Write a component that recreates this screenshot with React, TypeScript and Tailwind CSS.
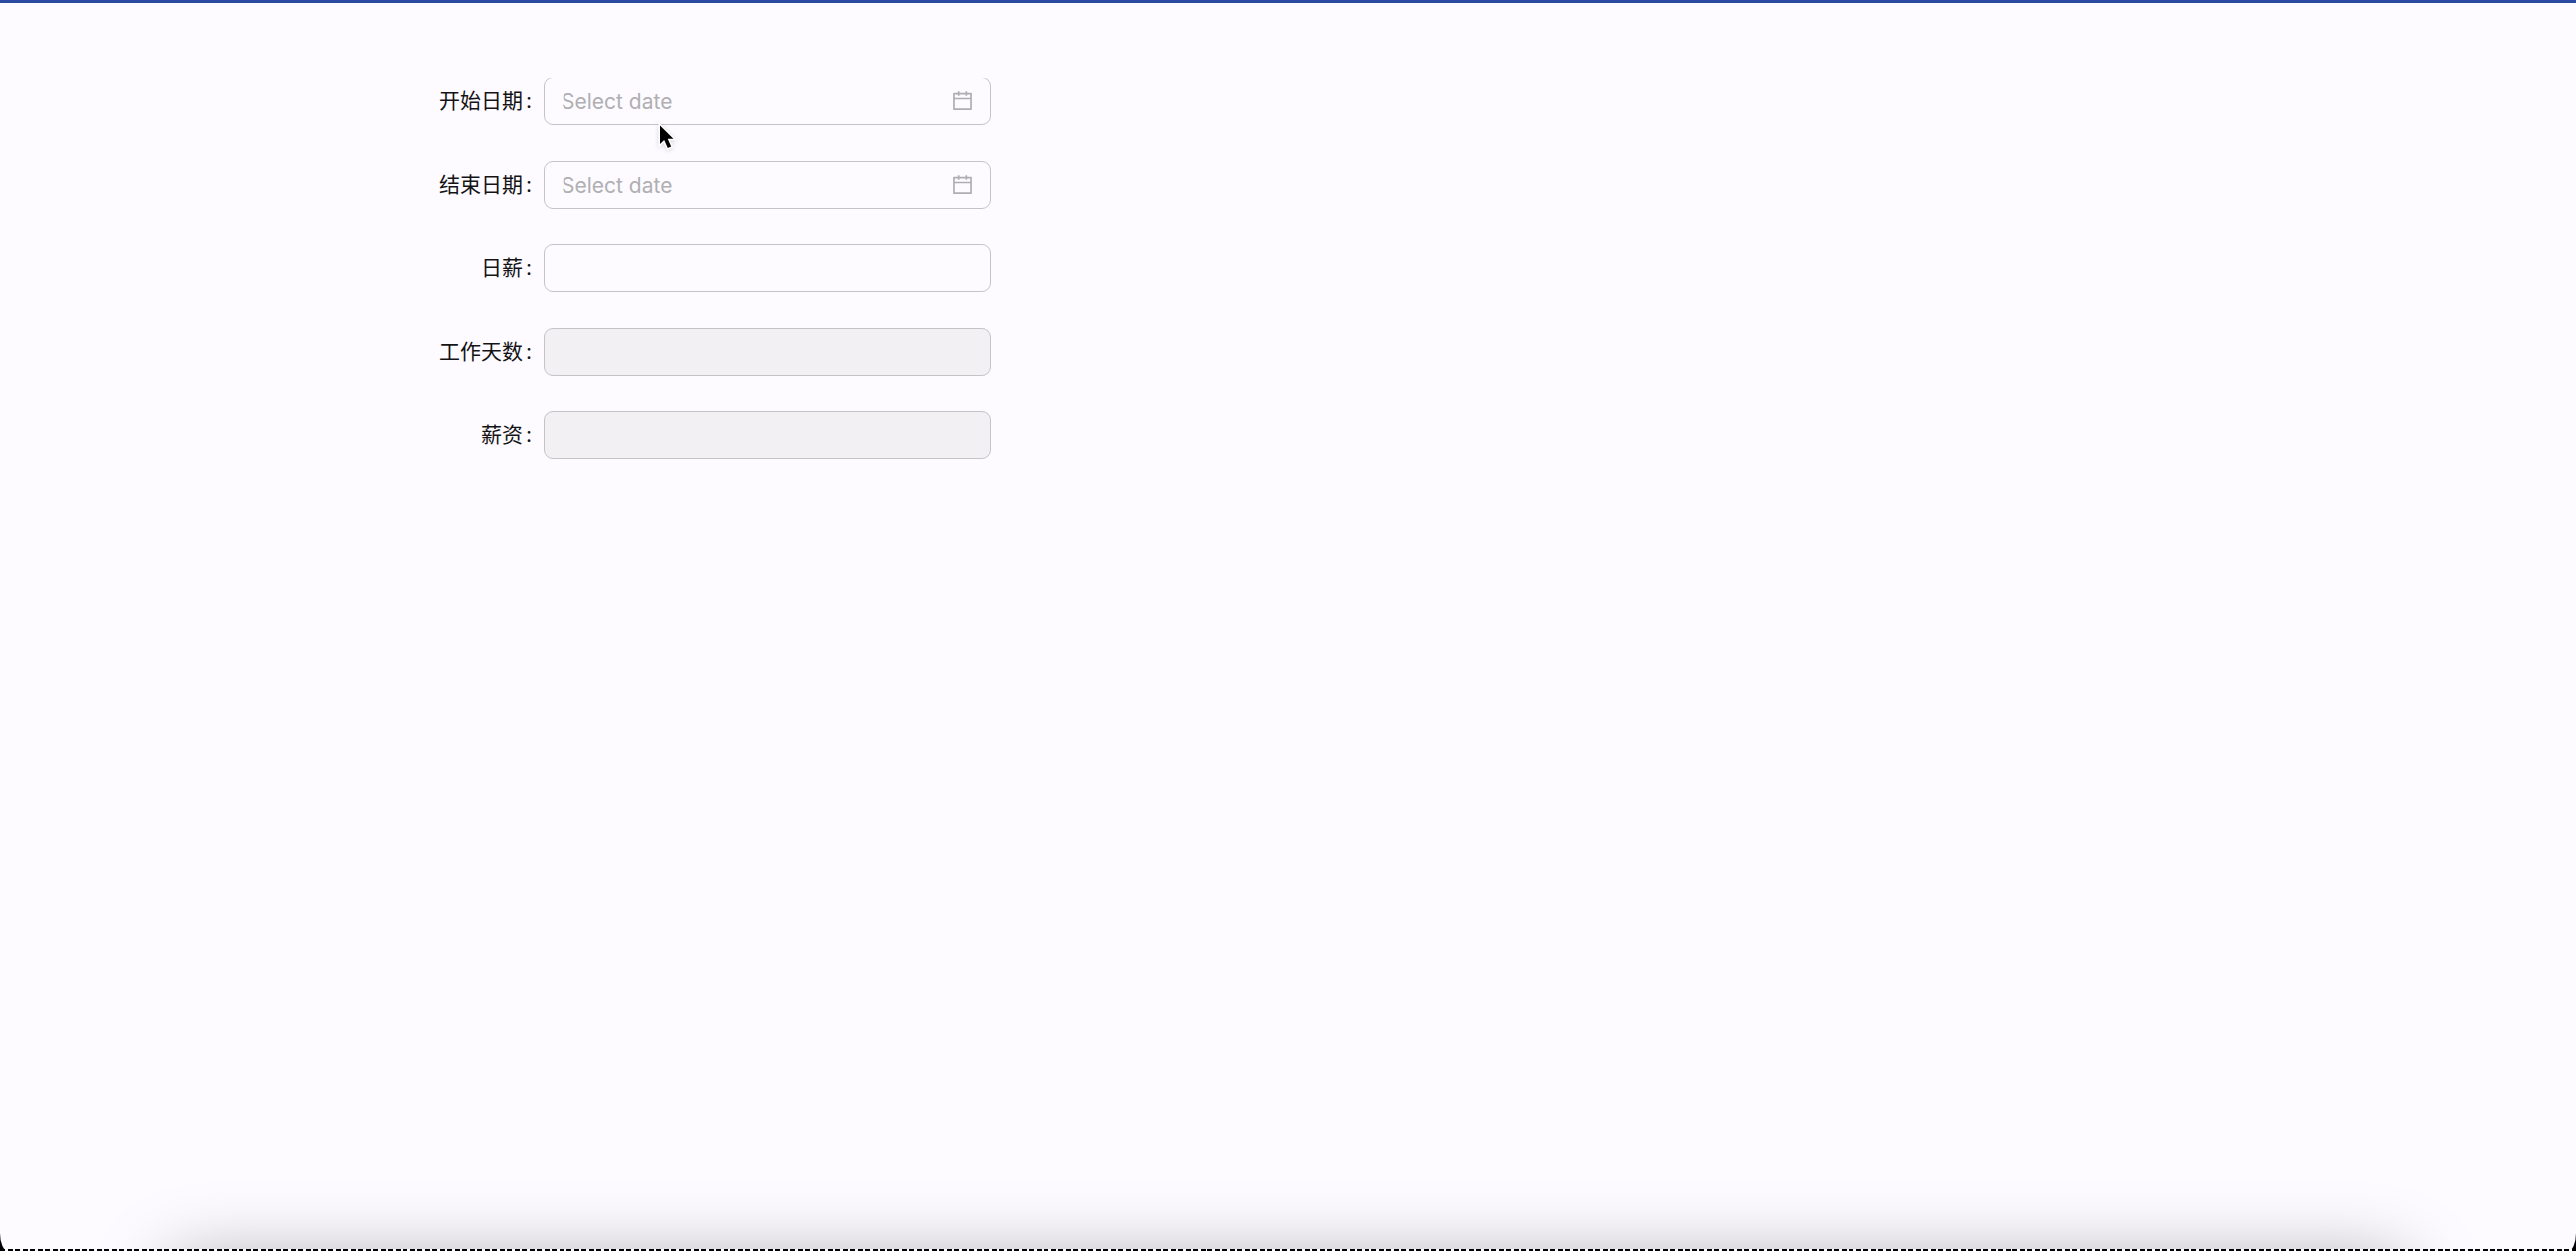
import type { ComponentProps } from "react";

const FIELDS = [
  { id: "start", label: "开始日期", type: "date" },
  { id: "end", label: "结束日期", type: "date" },
  { id: "daily-wage", label: "日薪", type: "text" },
  { id: "work-days", label: "工作天数", type: "readonly" },
  { id: "salary", label: "薪资", type: "readonly" },
];

function CalendarIcon(props: ComponentProps<"svg">) {
  return (
    <svg viewBox="64 64 896 896" fill="currentColor" aria-hidden="true" {...props}>
      <path d="M880 184H712v-64c0-4.400-3.600-8-8-8h-56c-4.400 0-8 3.600-8 8v64H384v-64c0-4.400-3.600-8-8-8h-56c-4.400 0-8 3.600-8 8v64H144c-17.700 0-32 14.300-32 32v664c0 17.700 14.300 32 32 32h736c17.700 0 32-14.300 32-32V216c0-17.700-14.300-32-32-32zm-40 656H184V460h656v380zM184 392V256h128v48c0 4.400 3.600 8 8 8h56c4.400 0 8-3.600 8-8v-48h256v48c0 4.400 3.600 8 8 8h56c4.400 0 8-3.600 8-8v-48h128v136H184z" />
    </svg>
  );
}

function Cursor() {
  return (
    <svg
      className="pointer-events-none absolute left-[661px] top-[121px] h-7 w-5 overflow-visible drop-shadow-sm"
      viewBox="0 0 20 28"
      aria-hidden="true"
    >
      <path
        d="M3 2.500v18.500l4.200-4 3.600 8 3.400-1.500-3.500-7.700h5.800z"
        fill="#000"
        stroke="#fff"
        strokeWidth="3"
        paintOrder="stroke"
      />
    </svg>
  );
}

export default function App() {
  return (
    <div className="relative min-h-screen bg-black font-['Inter','Noto_Sans_CJK_SC',sans-serif]">
      <main className="relative flex min-h-screen flex-col overflow-hidden rounded-[0_0_8px_8px/0_0_18px_18px] border-t-3 border-[#2b4ba0] bg-[#fdfbff]">
        <form className="ml-[12.5%] flex max-w-[673px] flex-col gap-9 pt-[75px]">
          {FIELDS.map((f) => (
            <div key={f.id} className="flex h-12 items-center">
              <label
                htmlFor={f.id}
                className="flex w-[223px] shrink-0 justify-end pr-3 text-[21px] leading-8 text-[#141315]"
              >
                {f.label}
                <span className="ml-[3px]">:</span>
              </label>
              <div className="relative flex-1">
                <input
                  id={f.id}
                  type="text"
                  placeholder={f.type === "date" ? "Select date" : undefined}
                  disabled={f.type === "readonly"}
                  className="block h-12 w-full rounded-[9px] border border-[#c4c3c6] px-[17px] text-[21px] text-[#141315] placeholder:text-[#b0afb2] disabled:bg-[#f2f0f3]"
                />
                {f.type === "date" && (
                  <CalendarIcon className="absolute right-[18px] top-[13px] size-[21px] text-[#aeadb0]" />
                )}
              </div>
            </div>
          ))}
        </form>
        {/* shadow cast by the dock below the fold */}
        <div className="absolute inset-x-[170px] top-full h-20 rounded-3xl shadow-[0_12px_75px_rgba(0,0,0,0.35)]" />
        <Cursor />
      </main>
      <div className="absolute inset-x-0 bottom-0 h-0.5 bg-[repeating-linear-gradient(90deg,#000_0_5px,#fdfbff_5px_8px,#000_8px_13px,#fdfbff_13px_15px)]" />
    </div>
  );
}
